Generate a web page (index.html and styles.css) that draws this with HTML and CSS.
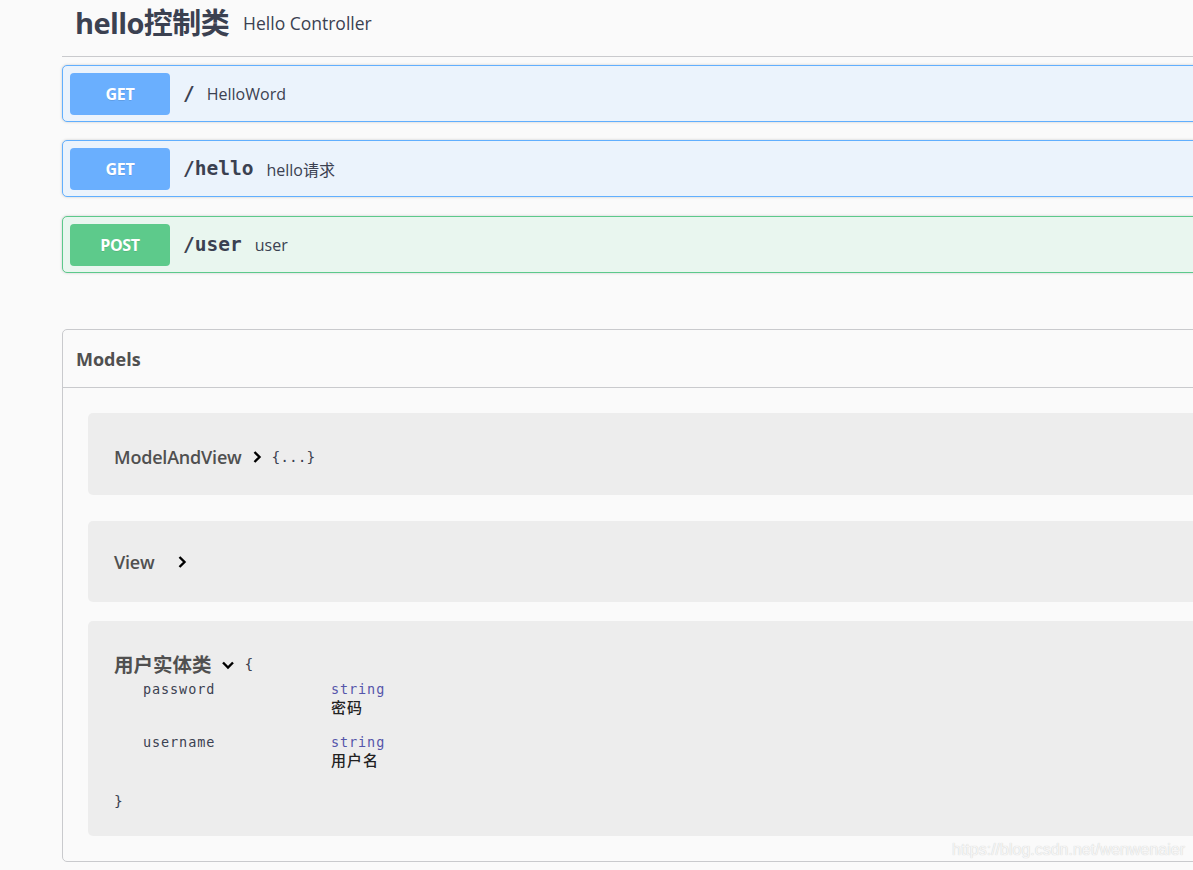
FILE: index.html
```html
<!DOCTYPE html>
<html lang="zh">
<head>
<meta charset="utf-8">
<title>Swagger UI</title>
<link rel="stylesheet" href="styles.css">
</head>
<body>
<div class="wrapper">
  <section class="tag-section">
    <h4 class="tag-title">
      <span class="tag-name">hello控制类</span>
      <small class="tag-desc">Hello Controller</small>
    </h4>
    <div class="opblock get">
      <span class="method get-bg">GET</span>
      <span class="path">/</span>
      <span class="summary">HelloWord</span>
    </div>
    <div class="opblock get">
      <span class="method get-bg">GET</span>
      <span class="path">/hello</span>
      <span class="summary">hello请求</span>
    </div>
    <div class="opblock post">
      <span class="method post-bg">POST</span>
      <span class="path">/user</span>
      <span class="summary">user</span>
    </div>
  </section>

  <section class="models">
    <h4 class="models-title">Models</h4>
    <div class="models-body">
      <div class="model-box short first">
        <span class="model-title">ModelAndView</span>
        <svg class="chev" width="10" height="14" viewBox="0 0 10 14"><polyline points="2.5,2 7.5,7 2.5,12" fill="none" stroke="#000" stroke-width="2.4"/></svg>
        <span class="brace">{...}</span>
      </div>
      <div class="model-box short second">
        <span class="model-title view">View</span>
        <svg class="chev" width="10" height="14" viewBox="0 0 10 14"><polyline points="2.5,2 7.5,7 2.5,12" fill="none" stroke="#000" stroke-width="2.4"/></svg>
      </div>
      <div class="model-box open">
        <div class="model-head">
          <span class="model-title cjk">用户实体类</span>
          <svg class="chev down" width="14" height="10" viewBox="0 0 14 10"><polyline points="2,2.5 7,7.5 12,2.5" fill="none" stroke="#000" stroke-width="2.4"/></svg>
          <span class="brace">{</span>
        </div>
        <div class="props">
          <div class="prop">
            <span class="prop-name">password</span>
            <div class="prop-info">
              <span class="prop-type">string</span>
              <span class="prop-desc">密码</span>
            </div>
          </div>
          <div class="prop">
            <span class="prop-name">username</span>
            <div class="prop-info">
              <span class="prop-type">string</span>
              <span class="prop-desc">用户名</span>
            </div>
          </div>
        </div>
        <div class="brace close">}</div>
      </div>
    </div>
  </section>
</div>
<div class="watermark">https://blog.csdn.net/wenwenaier</div>
</body>
</html>
```

FILE: styles.css
```css
html, body {
  margin: 0;
  padding: 0;
  background: #fafafa;
  overflow: hidden;
  height: 870px;
}
body {
  font-family: "Open Sans", "Noto Sans CJK SC", sans-serif;
  color: #3b4151;
  position: relative;
}
.wrapper {
  width: 1500px;
  margin-left: 62px;
}
.tag-title {
  margin: 0;
  height: 57px;
  box-sizing: border-box;
  border-bottom: 1px solid #c9cacd;
  display: flex;
  align-items: center;
  padding: 0 0 14px 13px;
}
.tag-name {
  font-size: 29px;
  font-weight: 700;
  font-family: "Open Sans", "Noto Sans CJK SC", sans-serif;
  color: #3b4151;
  letter-spacing: -0.6px;
}
.tag-desc {
  font-size: 17.5px;
  font-weight: 400;
  margin-left: 14px;
  color: #3b4151;
  padding-top: 3px;
}
.opblock {
  display: flex;
  align-items: center;
  height: 57px;
  box-sizing: border-box;
  padding: 0 7px;
  border-radius: 5px;
  box-shadow: 0 0 3px rgba(0,0,0,.19);
  margin-top: 8px;
  margin-bottom: 10px;
}
.opblock + .opblock { margin-top: 18px; }
.opblock.post { margin-top: 19px; }
.opblock.get {
  border: 1px solid #61affe;
  background: #ebf3fc;
}
.opblock.post {
  border: 1px solid #5cc98b;
  background: #e9f6ef;
}
.method {
  width: 100px;
  height: 42px;
  border-radius: 4px;
  color: #fff;
  font-weight: 700;
  font-size: 16px;
  display: flex;
  align-items: center;
  justify-content: center;
  text-shadow: 0 1px 0 rgba(0,0,0,.1);
  letter-spacing: -0.3px;
}
.get-bg { background: #6aaffe; }
.post-bg { background: #5dca8b; }
.path {
  font-family: "DejaVu Sans Mono", monospace;
  font-weight: 700;
  font-size: 19.5px;
  margin-left: 13px;
  color: #3b4151;
}
.summary {
  font-size: 16px;
  margin-left: 13px;
  color: #3b4151;
}
.opblock.get:first-of-type .summary { margin-left: 12px; }
.models {
  margin-top: 56px;
  border: 1px solid #c9cacd;
  border-radius: 5px;
  width: 1400px;
}
.models-title {
  margin: 0;
  height: 58px;
  box-sizing: border-box;
  border-bottom: 1px solid #c9cacd;
  display: flex;
  align-items: center;
  padding-left: 13px;
  font-size: 18px;
  font-weight: 700;
  color: #505050;
}
.models-body {
  padding: 25px 26px 25px 25px;
  display: flex;
  flex-direction: column;
}
.model-box {
  background: #ededed;
  border-radius: 5px;
  padding: 0 26px;
  box-sizing: border-box;
}
.model-box.short {
  display: flex;
  align-items: center;
}
.model-box.first { height: 82px; padding-top: 6px; }
.model-box.second { margin-top: 26px; height: 81px; padding-top: 0; }
.model-box.open { margin-top: 19px; height: 215px; padding-top: 28px; }
.model-title {
  font-size: 18px;
  font-weight: 600;
  color: #505050;
  letter-spacing: -0.2px;
}
.model-title.view { margin-right: 13px; }
.model-title.cjk { font-weight: 700; font-size: 19.5px; letter-spacing: 0; }
.chev { margin-left: 10px; }
.chev.down { margin-left: 9px; margin-top: 2px; }
.brace {
  font-family: "DejaVu Sans Mono", monospace;
  font-size: 14.5px;
  color: #3b4151;
  margin-left: 10px;
}
.model-head {
  display: flex;
  align-items: center;
}
.props {
  padding-left: 29px;
  margin-top: 2px;
}
.prop {
  display: flex;
  font-family: "DejaVu Sans Mono", monospace;
  font-size: 13.5px;
  letter-spacing: 0.9px;
  height: 53px;
}
.prop-name {
  width: 188px;
  color: #3b4151;
  line-height: 18px;
}
.prop-info {
  display: flex;
  flex-direction: column;
  line-height: 18px;
}
.prop-type { color: #55a; }
.prop-desc {
  font-family: "Noto Sans CJK SC", sans-serif;
  font-size: 15px;
  letter-spacing: 1px;
  color: #222;
  font-weight: 500;
}
.brace.close {
  margin-left: 0;
  margin-top: 6px;
  line-height: 18px;
}
.watermark {
  position: absolute;
  left: 952px;
  top: 841px;
  font-family: "Liberation Sans", Arial, sans-serif;
  font-size: 16px;
  color: #f6f6f6;
  text-shadow: 0 0 1px #c4c4c4;
  white-space: nowrap;
}
```
